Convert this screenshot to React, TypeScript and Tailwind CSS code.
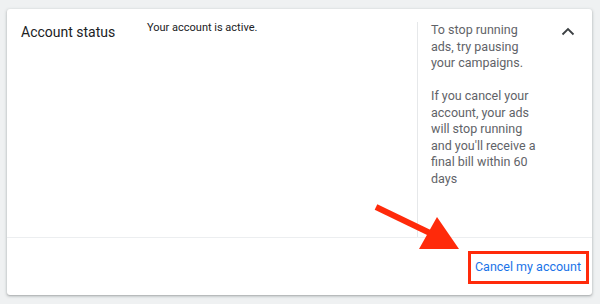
import React from "react";

export default function App() {
  return (
    <div
      className="relative w-[600px] h-[304px] bg-[#eff1f2] overflow-hidden"
      style={{ fontFamily: "Roboto, 'Liberation Sans', sans-serif" }}
    >
      <div className="absolute left-[7px] top-[9px] w-[585px] h-[286px] bg-white rounded-[3px] shadow-[0_1px_2px_rgba(60,64,67,0.3),0_1px_3px_1px_rgba(60,64,67,0.12)] flex flex-col">
        <div className="flex h-[229px] border-b border-[#eceef0]">
          <div className="w-[140px] pl-[14px] pt-[14px] text-[14px] leading-[18px] text-[#202124]">
            Account status
          </div>
          <div className="w-[270px] pt-[12px] text-[11px] leading-[14px] text-[#202124]">
            Your account is active.
          </div>
          <div className="mt-[13px] border-l border-[#e6e8ea] flex-1 flex">
            <div className="pl-[13px] w-[118px] text-[12.5px] leading-[16.5px] text-[#5f6368]">
              <p>To stop running ads, try pausing your campaigns.</p>
              <p className="mt-[16.5px]">
                If you cancel your account, your ads will stop running and
                you'll receive a final bill within 60 days
              </p>
            </div>
            <div className="flex-1 flex justify-end pr-[17px] pt-[5px]">
              <svg width="14" height="9" viewBox="0 0 14 9">
                <path
                  d="M1.5 7.5 L7 2 L12.5 7.5"
                  fill="none"
                  stroke="#3c4043"
                  strokeWidth="1.8"
                />
              </svg>
            </div>
          </div>
        </div>
        <div className="flex-1 flex justify-end items-center pr-[11px]">
          <div className="text-[12.5px] text-[#1a73e8] pt-[1px]">
            Cancel my account
          </div>
        </div>
      </div>
      <div className="absolute left-[468px] top-[251px] w-[121px] h-[33px] border-[3px] border-[#ff2a0a]" />
      <svg
        className="absolute left-0 top-0"
        width="600"
        height="304"
        viewBox="0 0 600 304"
      >
        <line
          x1="376"
          y1="207"
          x2="432"
          y2="234"
          stroke="#ff2a0a"
          strokeWidth="6"
        />
        <polygon points="459,249 437,217 419,249" fill="#ff2a0a" />
      </svg>
    </div>
  );
}
